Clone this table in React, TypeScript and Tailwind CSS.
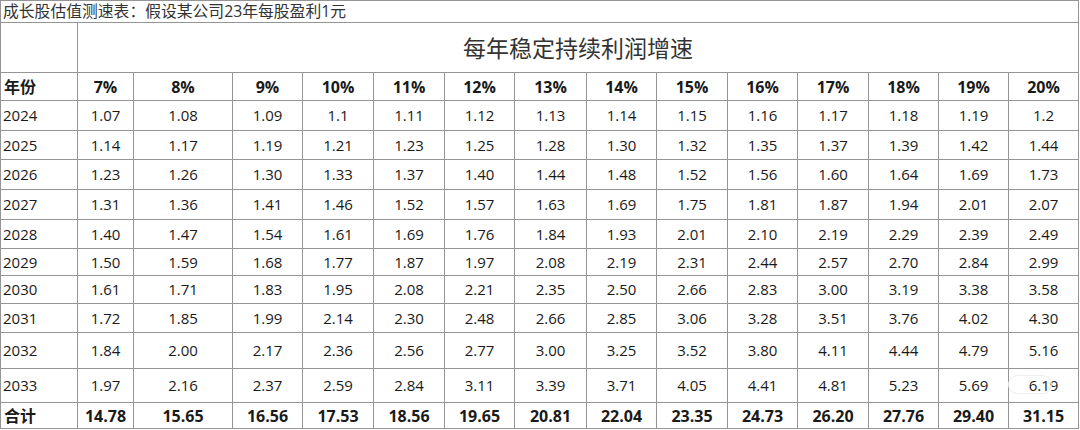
const rates = ['7%', '8%', '9%', '10%', '11%', '12%', '13%', '14%', '15%', '16%', '17%', '18%', '19%', '20%'];

const rows: { year: string; h: string; values: string[] }[] = [
  { year: '2024', h: 'h-[30px]', values: ['1.07', '1.08', '1.09', '1.1', '1.11', '1.12', '1.13', '1.14', '1.15', '1.16', '1.17', '1.18', '1.19', '1.2'] },
  { year: '2025', h: 'h-[29px]', values: ['1.14', '1.17', '1.19', '1.21', '1.23', '1.25', '1.28', '1.30', '1.32', '1.35', '1.37', '1.39', '1.42', '1.44'] },
  { year: '2026', h: 'h-[30px]', values: ['1.23', '1.26', '1.30', '1.33', '1.37', '1.40', '1.44', '1.48', '1.52', '1.56', '1.60', '1.64', '1.69', '1.73'] },
  { year: '2027', h: 'h-[30px]', values: ['1.31', '1.36', '1.41', '1.46', '1.52', '1.57', '1.63', '1.69', '1.75', '1.81', '1.87', '1.94', '2.01', '2.07'] },
  { year: '2028', h: 'h-[29px]', values: ['1.40', '1.47', '1.54', '1.61', '1.69', '1.76', '1.84', '1.93', '2.01', '2.10', '2.19', '2.29', '2.39', '2.49'] },
  { year: '2029', h: 'h-[27px]', values: ['1.50', '1.59', '1.68', '1.77', '1.87', '1.97', '2.08', '2.19', '2.31', '2.44', '2.57', '2.70', '2.84', '2.99'] },
  { year: '2030', h: 'h-[28px]', values: ['1.61', '1.71', '1.83', '1.95', '2.08', '2.21', '2.35', '2.50', '2.66', '2.83', '3.00', '3.19', '3.38', '3.58'] },
  { year: '2031', h: 'h-[29px]', values: ['1.72', '1.85', '1.99', '2.14', '2.30', '2.48', '2.66', '2.85', '3.06', '3.28', '3.51', '3.76', '4.02', '4.30'] },
  { year: '2032', h: 'h-[36px]', values: ['1.84', '2.00', '2.17', '2.36', '2.56', '2.77', '3.00', '3.25', '3.52', '3.80', '4.11', '4.44', '4.79', '5.16'] },
  { year: '2033', h: 'h-[34px]', values: ['1.97', '2.16', '2.37', '2.59', '2.84', '3.11', '3.39', '3.71', '4.05', '4.41', '4.81', '5.23', '5.69', '6.19'] },
];

const totals = ['14.78', '15.65', '16.56', '17.53', '18.56', '19.65', '20.81', '22.04', '23.35', '24.73', '26.20', '27.76', '29.40', '31.15'];

const cell = 'border-r border-b border-[#959595] flex items-center';

export default function App() {
  return (
    <div className="relative w-[1080px] h-[430px] bg-white text-[#1a1a1a] font-['Open_Sans','Noto_Sans_CJK_SC',sans-serif]">
      <div className="grid w-[1079px] grid-cols-[77px_56px_99px_70px_71px_71px_70px_72px_70px_71px_70px_71px_70px_70px_70px] border-l border-t border-[#959595]">
        {/* title */}
        <div className={`${cell} col-span-15 h-[22px] pl-[2px] text-[15.8px] text-[#333] leading-none`}>
          成长股估值测速表：假设某公司23年每股盈利1元
        </div>

        {/* header */}
        <div className={`${cell} h-[50px]`} />
        <div className={`${cell} col-span-14 h-[50px] justify-center text-[23px] text-[#333] pt-[2px]`}>
          每年稳定持续利润增速
        </div>

        {/* rates */}
        <div className={`${cell} h-[28px] pl-[3px] text-[16px] font-bold`}>年份</div>
        {rates.map((r) => (
          <div key={r} className={`${cell} h-[28px] justify-center text-[16px] font-bold`}>
            {r}
          </div>
        ))}

        {rows.map((row) =>
          [
            <div key={row.year} className={`${cell} ${row.h} pl-[2px] text-[15px]`}>
              {row.year}
            </div>,
            ...row.values.map((v, i) => (
              <div key={row.year + i} className={`${cell} ${row.h} justify-center text-[15px]`}>
                {v}
              </div>
            )),
          ]
        )}

        <div className={`${cell} h-[26px] pl-[3px] text-[16px] font-bold`}>合计</div>
        {totals.map((t) => (
          <div key={t} className={`${cell} h-[26px] justify-center text-[16px] font-bold`}>
            {t}
          </div>
        ))}
      </div>

      {/* faint watermark pill */}
      <div className="absolute left-[1008px] top-[375px] h-[19px] w-[44px] rounded-full border border-[#eeeeee]" />
    </div>
  );
}
